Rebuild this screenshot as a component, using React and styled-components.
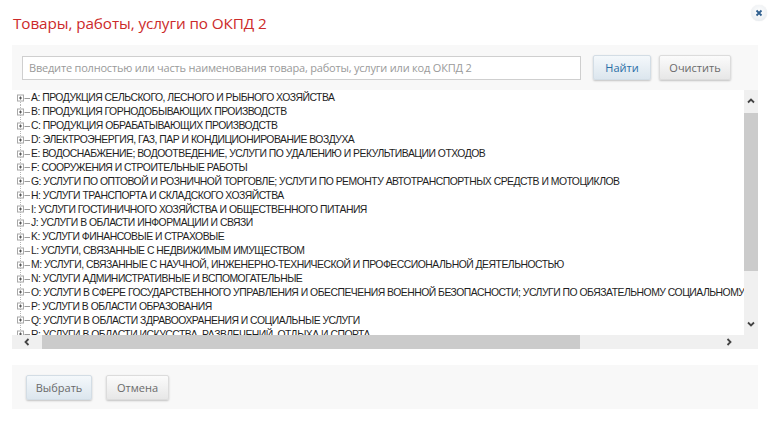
import React from "react";
import styled, { createGlobalStyle } from "styled-components";

const Global = createGlobalStyle`
  html, body { margin: 0; padding: 0; background: #fff; }
  body { font-family: "Open Sans", "DejaVu Sans", sans-serif; }
  * { box-sizing: border-box; }
`;

const Dialog = styled.div`
  width: 772px;
  height: 422px;
  padding: 0 14px 0 12px;
  display: flex;
  flex-direction: column;
  position: relative;
  background: #fff;
`;

const Header = styled.div`
  height: 45px;
  display: flex;
  align-items: center;
  padding-left: 1px;
`;

const Title = styled.h1`
  margin: 0;
  font-family: "Open Sans", sans-serif;
  font-weight: 400;
  font-size: 15.3px;
  color: #cc2a2a;
  letter-spacing: -0.1px;
`;

const Close = styled.button`
  position: absolute;
  top: 5px;
  right: 5px;
  width: 16px;
  height: 16px;
  border-radius: 50%;
  border: none;
  padding: 0;
  background: radial-gradient(circle at 50% 40%, #ffffff 0%, #eef1f4 60%, #dde2e7 100%);
  box-shadow: 0 0 1px rgba(0, 0, 0, 0.15);
  display: flex;
  align-items: center;
  justify-content: center;
`;

const SearchPanel = styled.div`
  height: 45px;
  background: #f8f8f8;
  display: flex;
  align-items: center;
  padding: 0 10px;
  gap: 12px;
`;

const SearchInput = styled.input`
  width: 559px;
  height: 24px;
  border: 1px solid #cfcfcf;
  background: #fff;
  padding: 0 6px;
  font-family: "Open Sans", sans-serif;
  font-size: 11px;
  letter-spacing: -0.2px;
  color: #333;
  outline: none;
  &::placeholder { color: #9a9a9a; }
`;

const Button = styled.button`
  height: 25px;
  width: ${(p) => p.w}px;
  border: 1px solid ${(p) => (p.primary ? "#d3dde5" : "#dcdcdc")};
  border-radius: 2px;
  background: ${(p) =>
    p.primary
      ? "linear-gradient(#f4f8fb, #dce6ee)"
      : "linear-gradient(#fbfbfb, #e7e7e7)"};
  box-shadow: 0 1px 2px rgba(0, 0, 0, 0.22);
  font-family: "Open Sans", sans-serif;
  font-size: 11px;
  color: ${(p) => (p.accent ? "#2b6ea6" : "#6a6a6a")};
  padding: 0;
  margin-left: ${(p) => p.ml || 0}px;
`;

const TreeBox = styled.div`
  height: 259px;
  display: grid;
  grid-template-columns: 1fr 14px;
  grid-template-rows: 1fr 14px;
`;

const TreeContent = styled.div`
  overflow: hidden;
  padding: 1px 0 0 4px;
  background: #fff;
`;

const Row = styled.div`
  height: 13.9px;
  display: flex;
  align-items: center;
  white-space: nowrap;
  font-family: "Liberation Sans", Arial, sans-serif;
  font-size: 10.4px;
  letter-spacing: -0.5px;
  color: #1e1e1e;
`;

const NodeIcon = styled.svg`
  flex: none;
  width: 14px;
  height: 14px;
  margin-right: 1px;
`;

const VTrack = styled.div`
  background: #f0f0f0;
  display: flex;
  flex-direction: column;
  align-items: center;
  padding: 4px 0 4px;
`;

const HTrack = styled.div`
  background: #f0f0f0;
  display: flex;
  align-items: center;
  padding: 0 8px 0 8px;
`;

const Corner = styled.div`
  background: #f0f0f0;
`;

const Arrow = styled.svg`
  flex: none;
  width: 14px;
  height: 14px;
`;

const VThumb = styled.div`
  width: 14px;
  margin-top: 5px;
  height: 158px;
  background: #cbcbcb;
`;

const HThumb = styled.div`
  height: 14px;
  margin-left: 8px;
  width: 538px;
  background: #cbcbcb;
`;

const Spacer = styled.div`
  flex: 1;
`;

const Footer = styled.div`
  margin-top: 16px;
  height: 44px;
  background: #f8f8f8;
  display: flex;
  align-items: center;
  padding: 0 14px;
  gap: 14px;
`;

const items = [
  "A: ПРОДУКЦИЯ СЕЛЬСКОГО, ЛЕСНОГО И РЫБНОГО ХОЗЯЙСТВА",
  "B: ПРОДУКЦИЯ ГОРНОДОБЫВАЮЩИХ ПРОИЗВОДСТВ",
  "C: ПРОДУКЦИЯ ОБРАБАТЫВАЮЩИХ ПРОИЗВОДСТВ",
  "D: ЭЛЕКТРОЭНЕРГИЯ, ГАЗ, ПАР И КОНДИЦИОНИРОВАНИЕ ВОЗДУХА",
  "E: ВОДОСНАБЖЕНИЕ; ВОДООТВЕДЕНИЕ, УСЛУГИ ПО УДАЛЕНИЮ И РЕКУЛЬТИВАЦИИ ОТХОДОВ",
  "F: СООРУЖЕНИЯ И СТРОИТЕЛЬНЫЕ РАБОТЫ",
  "G: УСЛУГИ ПО ОПТОВОЙ И РОЗНИЧНОЙ ТОРГОВЛЕ; УСЛУГИ ПО РЕМОНТУ АВТОТРАНСПОРТНЫХ СРЕДСТВ И МОТОЦИКЛОВ",
  "H: УСЛУГИ ТРАНСПОРТА И СКЛАДСКОГО ХОЗЯЙСТВА",
  "I: УСЛУГИ ГОСТИНИЧНОГО ХОЗЯЙСТВА И ОБЩЕСТВЕННОГО ПИТАНИЯ",
  "J: УСЛУГИ В ОБЛАСТИ ИНФОРМАЦИИ И СВЯЗИ",
  "K: УСЛУГИ ФИНАНСОВЫЕ И СТРАХОВЫЕ",
  "L: УСЛУГИ, СВЯЗАННЫЕ С НЕДВИЖИМЫМ ИМУЩЕСТВОМ",
  "M: УСЛУГИ, СВЯЗАННЫЕ С НАУЧНОЙ, ИНЖЕНЕРНО-ТЕХНИЧЕСКОЙ И ПРОФЕССИОНАЛЬНОЙ ДЕЯТЕЛЬНОСТЬЮ",
  "N: УСЛУГИ АДМИНИСТРАТИВНЫЕ И ВСПОМОГАТЕЛЬНЫЕ",
  "O: УСЛУГИ В СФЕРЕ ГОСУДАРСТВЕННОГО УПРАВЛЕНИЯ И ОБЕСПЕЧЕНИЯ ВОЕННОЙ БЕЗОПАСНОСТИ; УСЛУГИ ПО ОБЯЗАТЕЛЬНОМУ СОЦИАЛЬНОМУ ОБЕСПЕЧЕНИЮ",
  "P: УСЛУГИ В ОБЛАСТИ ОБРАЗОВАНИЯ",
  "Q: УСЛУГИ В ОБЛАСТИ ЗДРАВООХРАНЕНИЯ И СОЦИАЛЬНЫЕ УСЛУГИ",
  "R: УСЛУГИ В ОБЛАСТИ ИСКУССТВА, РАЗВЛЕЧЕНИЙ, ОТДЫХА И СПОРТА",
  "S: УСЛУГИ ОБЩЕСТВЕННЫХ ОРГАНИЗАЦИЙ; ПРОЧИЕ УСЛУГИ ДЛЯ НАСЕЛЕНИЯ",
];

function Node({ first }) {
  return (
    <NodeIcon viewBox="0 0 14 14">
      <path
        d={first ? "M4.5 7 V14" : "M4.5 0 V14"}
        stroke="#b5b5b5"
        strokeWidth="1"
        strokeDasharray="1 1"
        fill="none"
      />
      <path d="M8.5 7.5 H14" stroke="#9a9a9a" strokeWidth="1" fill="none" />
      <rect x="1.5" y="4" width="6" height="6" fill="#fff" stroke="#a8a8a8" strokeWidth="1" />
      <path d="M3 7 H6 M4.5 5.5 V8.5" stroke="#555" strokeWidth="1" fill="none" />
    </NodeIcon>
  );
}

const Chevron = ({ dir }) => {
  const d = {
    up: "M4 8.5 L7 5.5 L10 8.5",
    down: "M4 5.5 L7 8.5 L10 5.5",
    left: "M8.5 4 L5.5 7 L8.5 10",
    right: "M5.5 4 L8.5 7 L5.5 10",
  }[dir];
  return (
    <Arrow viewBox="0 0 14 14">
      <path d={d} stroke="#444" strokeWidth="1.8" fill="none" />
    </Arrow>
  );
};

export default function App() {
  return (
    <>
      <Global />
      <Dialog>
        <Header>
          <Title>Товары, работы, услуги по ОКПД 2</Title>
        </Header>
        <Close aria-label="Закрыть">
          <svg width="8" height="8" viewBox="0 0 8 8">
            <path d="M1.5 1.5 L6.5 6.5 M6.5 1.5 L1.5 6.5" stroke="#2f5f8f" strokeWidth="1.8" />
          </svg>
        </Close>
        <SearchPanel>
          <SearchInput placeholder="Введите полностью или часть наименования товара, работы, услуги или код ОКПД 2" />
          <Button primary accent w={58}>Найти</Button>
          <Button w={72} ml={-4}>Очистить</Button>
        </SearchPanel>
        <TreeBox>
          <TreeContent>
            {items.map((t, i) => (
              <Row key={t}>
                <Node first={i === 0} />
                {t}
              </Row>
            ))}
          </TreeContent>
          <VTrack>
            <Chevron dir="up" />
            <VThumb />
            <Spacer />
            <Chevron dir="down" />
          </VTrack>
          <HTrack>
            <Chevron dir="left" />
            <HThumb />
            <Spacer />
            <Chevron dir="right" />
          </HTrack>
          <Corner />
        </TreeBox>
        <Footer>
          <Button primary w={66}>Выбрать</Button>
          <Button w={63}>Отмена</Button>
        </Footer>
      </Dialog>
    </>
  );
}
